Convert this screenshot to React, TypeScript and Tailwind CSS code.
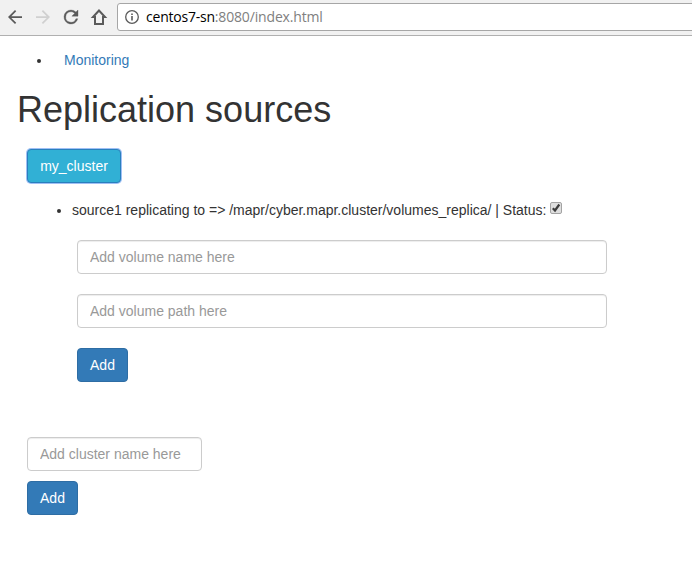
import React from "react";

function Field({ placeholder, className }: { placeholder: string; className: string }) {
  return (
    <input
      placeholder={placeholder}
      className={`block h-[34px] rounded border border-[#ccc] bg-white px-3 py-1.5 text-sm leading-5 text-[#555] shadow-[inset_0_1px_1px_rgba(0,0,0,0.075)] placeholder:text-[#999] ${className}`}
    />
  );
}

function AddButton() {
  return (
    <button className="block h-[34px] w-[51px] rounded border border-[#2e6da4] bg-[#337ab7] text-sm leading-5 text-white">
      Add
    </button>
  );
}

function Toolbar() {
  return (
    <header className="flex h-9 items-start overflow-hidden border-b border-[#b0b0b0] bg-[#f1f1f1]">
      <svg className="h-[34px] w-[117px] shrink-0" viewBox="0 0 117 34" fill="#5a5a5a">
        <path transform="translate(4.5 6.5) scale(.875)" d="M20 11H7.830l5.590-5.590L12 4l-8 8 8 8 1.410-1.410L7.830 13H20v-2z" />
        <path transform="translate(53.5 6.5) scale(-.875 .875)" fill="#d0d0d0" d="M20 11H7.830l5.590-5.590L12 4l-8 8 8 8 1.410-1.410L7.830 13H20v-2z" />
        <path transform="translate(60.5 6.5) scale(.875)" stroke="#5a5a5a" strokeWidth=".4" d="M17.650 6.350A7.958 7.958 0 0 0 12 4a8 8 0 1 0 7.730 10h-2.080A6 6 0 1 1 12 6c1.660 0 3.140.690 4.220 1.780L13 11h7V4l-2.350 2.350z" />
        <path d="M99 10.500L93 17h2v7h8v-7h2z" fill="none" stroke="#5a5a5a" strokeWidth="2" />
      </svg>
      <div className="mt-[3px] flex h-[28px] w-[600px] shrink-0 items-center rounded-[3px] border border-[#a6a6a6] bg-white pl-[7px]">
        <svg className="h-[14px] w-[14px]" viewBox="0 0 14 14" fill="none" stroke="#5a5a5a">
          <circle cx="7" cy="7" r="6.300" strokeWidth="1.300" />
          <path d="M7 6v4.500M7 3.500V5" strokeWidth="1.600" />
        </svg>
        <span className="ml-[7px] font-['Open_Sans',sans-serif] text-sm tracking-[-0.16px] text-[#808080]">
          <span className="tracking-[-0.22px] text-black">centos7-sn</span>:8080/index.html
        </span>
      </div>
    </header>
  );
}

export default function App() {
  return (
    <div className="h-[569px] overflow-hidden bg-white font-['Liberation_Sans',Arial,sans-serif] text-sm leading-5 text-[#333]">
      <Toolbar />
      <main>
        <div className="mt-[14px] flex h-5 items-center pl-[37px]">
          <span className="mt-[2px] h-1 w-1 rounded-full bg-[#333]" />
          <a className="ml-[23px] text-[#337ab7]">Monitoring</a>
        </div>
        <h1 className="mt-5 pl-[17px] text-[36px] leading-[40px]">Replication sources</h1>
        <button className="mt-[19px] ml-[27px] block h-[34px] w-[94px] rounded border border-[#2a7fbd] bg-[#31b0d5] text-white shadow-[0_0_0_1px_#9fc0f5]">
          my_cluster
        </button>
        <div className="mt-[17px] flex h-5 items-center pl-[57px]">
          <span className="mt-[2px] h-1 w-1 rounded-full bg-[#333]" />
          <span className="ml-[11px]">source1 replicating to =&gt; /mapr/cyber.mapr.cluster/volumes_replica/ | Status:</span>
          <svg className="mb-1 ml-[3.500px] h-3 w-3" viewBox="0 0 12 12" fill="none">
            <rect x="0.500" y="0.500" width="11" height="11" rx="1.500" fill="#dedede" stroke="#a3a3a3" />
            <path d="M2.800 6.200l2.200 2.300L9.300 2.500" stroke="#3c3c3c" strokeWidth="2.200" />
          </svg>
        </div>
        <section className="mt-5 flex flex-col gap-5 pl-[77px]">
          <Field placeholder="Add volume name here" className="w-[530px]" />
          <Field placeholder="Add volume path here" className="w-[530px]" />
          <AddButton />
        </section>
        <section className="mt-[55px] flex flex-col gap-[10px] pl-[27px]">
          <Field placeholder="Add cluster name here" className="w-[175px]" />
          <AddButton />
        </section>
      </main>
    </div>
  );
}
